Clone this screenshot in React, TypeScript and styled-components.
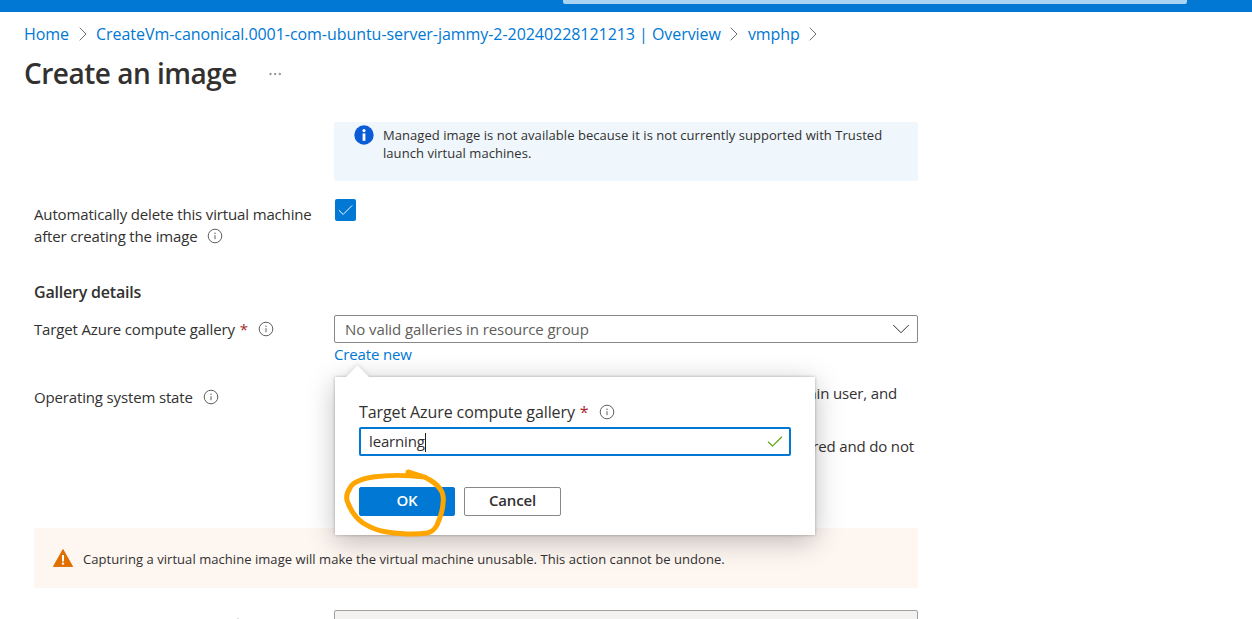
import React from "react";
import styled, { createGlobalStyle } from "styled-components";
import { ChevronDown, ChevronRight, Check, MoreHorizontal } from "lucide-react";

const GlobalStyle = createGlobalStyle`
  html, body {
    margin: 0;
    padding: 0;
    background: #fff;
    overflow: hidden;
  }
  body {
    font-family: "Open Sans", "Noto Sans", "Liberation Sans", sans-serif;
    color: #323130;
  }
`;

const Page = styled.div`
  width: 1252px;
  height: 619px;
  overflow: hidden;
`;

const TopBar = styled.div`
  height: 12px;
  background: #0078d4;
  padding-left: 563px;
`;

const SearchBox = styled.div`
  width: 624px;
  height: 4px;
  background: #a9d3f2;
  border-radius: 0 0 2px 2px;
`;

const Breadcrumb = styled.nav`
  display: flex;
  align-items: center;
  height: 44px;
  padding-left: 24px;
  font-size: 16px;
  letter-spacing: -0.05px;
  color: #0078d4;
  svg {
    color: #605e5c;
    margin: 0 1.5px;
  }
`;

const TitleRow = styled.div`
  display: flex;
  align-items: center;
  height: 36px;
  padding-left: 24px;
  color: #605e5c;
`;

const Title = styled.h1`
  margin: -2px 30px 0 0;
  font-size: 28px;
  font-weight: 600;
  letter-spacing: -0.5px;
  color: #323130;
`;

const Form = styled.div`
  width: 884px;
  margin: 30px 0 0 34px;
  display: flex;
  flex-direction: column;
`;

const Row = styled.div<{ $top?: number }>`
  display: grid;
  grid-template-columns: 300px 584px;
  margin-top: ${(p) => p.$top ?? 0}px;
`;

const Notice = styled.div`
  grid-column: 2;
  height: 59px;
  background: #eff6fc;
  border-radius: 2px;
  box-sizing: border-box;
  padding: 4px 20px 0 20px;
  display: flex;
  gap: 9px;
  font-size: 13px;
  line-height: 18px;
  letter-spacing: 0.05px;
  svg {
    flex: none;
    margin-top: -1px;
  }
`;

const Label = styled.div<{ $top?: number }>`
  margin-top: ${(p) => p.$top ?? 0}px;
  font-size: 15px;
  line-height: 22px;
  letter-spacing: -0.15px;
`;

const CalloutLabel = styled(Label)`
  font-size: 16px;
  letter-spacing: -0.1px;
`;

const Required = styled.span`
  color: #a4262c;
  margin-left: 5px;
`;

const InfoMark = styled.span`
  display: inline-flex;
  vertical-align: -2px;
  margin-left: 10px;
`;

const Checkbox = styled.div`
  width: 21px;
  height: 22px;
  margin-left: 1px;
  background: #0078d4;
  border-radius: 2px;
  display: flex;
  align-items: center;
  justify-content: center;
  color: #fff;
`;

const SectionTitle = styled.h2`
  margin: 34px 0 0;
  font-size: 16px;
  line-height: 22px;
  font-weight: 600;
  letter-spacing: -0.2px;
`;

const Select = styled.div`
  height: 28px;
  box-sizing: border-box;
  border: 1px solid #8a8886;
  border-radius: 2px;
  padding: 0 1px 0 10px;
  display: flex;
  align-items: center;
  justify-content: space-between;
  font-size: 15px;
  letter-spacing: -0.08px;
  color: #605e5c;
  svg {
    color: #323130;
  }
`;

const CreateNew = styled.a`
  display: block;
  font-size: 15px;
  line-height: 22px;
  letter-spacing: -0.15px;
  color: #0078d4;
`;

const StateOption = styled.div<{ $inset: number; $top?: number }>`
  text-align: right;
  white-space: nowrap;
  padding-right: ${(p) => p.$inset}px;
  margin-top: ${(p) => p.$top ?? 0}px;
  font-size: 15px;
  line-height: 22px;
  letter-spacing: -0.15px;
`;

const StateField = styled.div`
  position: relative;
`;

const Warning = styled.div`
  display: flex;
  align-items: center;
  gap: 10px;
  height: 60px;
  margin-top: 71px;
  padding-left: 19px;
  background: #fef6f1;
  font-size: 13px;
  letter-spacing: 0.05px;
`;

const WarningText = styled.span`
  padding-top: 2px;
`;

const DisabledInput = styled.div`
  grid-column: 2;
  height: 30px;
  box-sizing: border-box;
  border: 1px solid #a19f9d;
  border-radius: 2px;
  background: #f3f2f1;
`;

const ClippedLabel = styled.div`
  text-align: right;
  padding-right: 88px;
  padding-top: 8px;
  line-height: 0;
`;

/* callout anchored under the "Create new" link */
const Callout = styled.div`
  position: absolute;
  left: 1px;
  top: -5px;
  width: 480px;
  height: 158px;
  box-sizing: border-box;
  padding: 24px 24px 0;
  background: #fff;
  box-shadow: 0 0 3px rgba(0, 0, 0, 0.28), 0 6px 26px rgba(0, 0, 0, 0.26);
  z-index: 2;
  &::before {
    content: "";
    position: absolute;
    left: 14px;
    top: -8px;
    width: 17px;
    height: 17px;
    background: #fff;
    transform: rotate(45deg);
    box-shadow: -2px -2px 4px rgba(0, 0, 0, 0.08);
  }
`;

const TextInput = styled.div`
  height: 29px;
  margin-top: 4px;
  box-sizing: border-box;
  border: 2px solid #0078d4;
  border-radius: 2px;
  padding: 0 4px 0 8px;
  display: flex;
  align-items: center;
  justify-content: space-between;
  font-size: 15px;
  letter-spacing: -0.15px;
  color: #323130;
  svg {
    color: #57a300;
  }
`;

const Caret = styled.span`
  display: inline-block;
  width: 1px;
  height: 19px;
  background: #201f1e;
  vertical-align: -5px;
`;

const Actions = styled.div`
  display: flex;
  gap: 9px;
  margin-top: 31px;
`;

const Button = styled.button<{ $primary?: boolean }>`
  width: ${(p) => (p.$primary ? 96 : 97)}px;
  height: 29px;
  padding: 0 0 3px;
  border: 1px solid ${(p) => (p.$primary ? "#0078d4" : "#8a8886")};
  border-radius: 2px;
  background: ${(p) => (p.$primary ? "#0078d4" : "#fff")};
  color: ${(p) => (p.$primary ? "#fff" : "#323130")};
  font-family: inherit;
  font-size: 15px;
  font-weight: 600;
  letter-spacing: -0.15px;
`;

const Scribble = styled.svg`
  position: absolute;
  left: 0;
  top: 80px;
  pointer-events: none;
`;

const InfoCircle = () => (
  <svg width="16" height="16" viewBox="0 0 16 16" fill="none">
    <circle cx="8" cy="8" r="6.8" stroke="#605e5c" />
    <path d="M8 7.2v4" stroke="#605e5c" />
    <circle cx="8" cy="5.2" r="0.7" fill="#605e5c" />
  </svg>
);

const NoticeIcon = () => (
  <svg width="20" height="20" viewBox="0 0 20 20">
    <circle cx="10" cy="10" r="9.7" fill="#0b5cd8" />
    <circle cx="10" cy="5.6" r="1.6" fill="#fff" />
    <rect x="8.6" y="8.4" width="2.8" height="7.4" fill="#fff" />
  </svg>
);

const WarningIcon = () => (
  <svg width="20" height="18" viewBox="0 0 20 18">
    <path d="M10 .6 19.6 17.6H.4Z" fill="#e06f00" stroke="#e06f00" strokeLinejoin="round" />
    <rect x="9" y="6" width="2" height="6.5" fill="#fff" />
    <circle cx="10" cy="14.6" r="1.2" fill="#fff" />
  </svg>
);

export default function App() {
  return (
    <Page>
      <GlobalStyle />
      <TopBar>
        <SearchBox />
      </TopBar>
      <Breadcrumb>
        Home
        <ChevronRight size={24} strokeWidth={0.9} />
        CreateVm-canonical.0001-com-ubuntu-server-jammy-2-20240228121213 | Overview
        <ChevronRight size={24} strokeWidth={0.9} />
        vmphp
        <ChevronRight size={24} strokeWidth={0.9} />
      </Breadcrumb>
      <TitleRow>
        <Title>Create an image</Title>
        <MoreHorizontal size={16} strokeWidth={1} />
      </TitleRow>
      <Form>
        <Row>
          <Notice>
            <NoticeIcon />
            <span>
              Managed image is not available because it is not currently supported with Trusted launch virtual
              machines.
            </span>
          </Notice>
        </Row>
        <Row $top={18}>
          <Label $top={4}>
            Automatically delete this virtual machine
            <br />
            after creating the image
            <InfoMark>
              <InfoCircle />
            </InfoMark>
          </Label>
          <Checkbox>
            <Check size={19} strokeWidth={1.2} />
          </Checkbox>
        </Row>
        <SectionTitle>Gallery details</SectionTitle>
        <Row $top={12}>
          <Label $top={3}>
            Target Azure compute gallery
            <Required>*</Required>
            <InfoMark>
              <InfoCircle />
            </InfoMark>
          </Label>
          <div>
            <Select>
              No valid galleries in resource group
              <ChevronDown size={30} strokeWidth={0.8} />
            </Select>
            <CreateNew>Create new</CreateNew>
          </div>
        </Row>
        <Row $top={17}>
          <Label $top={4}>
            Operating system state
            <InfoMark>
              <InfoCircle />
            </InfoMark>
          </Label>
          <StateField>
            <Callout>
              <CalloutLabel>
                Target Azure compute gallery
                <Required>*</Required>
                <InfoMark>
                  <InfoCircle />
                </InfoMark>
              </CalloutLabel>
              <TextInput>
                <span>
                  learning
                  <Caret />
                </span>
                <Check size={20} strokeWidth={1.3} />
              </TextInput>
              <Actions>
                <Button $primary>OK</Button>
                <Button>Cancel</Button>
              </Actions>
              <Scribble width="125" height="85" viewBox="0 0 125 85">
                <path
                  d="M90 20C72 18 52 18 38 20C26 22 17 26 15 31C11 37 11 42 13 46C16 54 21 61 28 66C36 71 44 74 52 75C66 77 80 78 92 76C97 75 100 72 102 68C105 61 108 53 108 46C109 41 108 38 107 35C104 29 100 26 95 23C88 19 80 17 73 15"
                  fill="none"
                  stroke="#ffa500"
                  strokeWidth="5"
                  strokeLinecap="round"
                  strokeLinejoin="round"
                />
              </Scribble>
            </Callout>
            <StateOption $inset={21}>
              VMs created from this image require hostname, admin user, and
            </StateOption>
            <StateOption $inset={4} $top={31}>
              VMs created from this image are completely configured and do not
            </StateOption>
          </StateField>
        </Row>
        <Warning>
          <WarningIcon />
          <WarningText>
            Capturing a virtual machine image will make the virtual machine unusable. This action cannot be undone.
          </WarningText>
        </Warning>
        <Row $top={22}>
          <ClippedLabel>
            <InfoCircle />
          </ClippedLabel>
          <DisabledInput />
        </Row>
      </Form>
    </Page>
  );
}
